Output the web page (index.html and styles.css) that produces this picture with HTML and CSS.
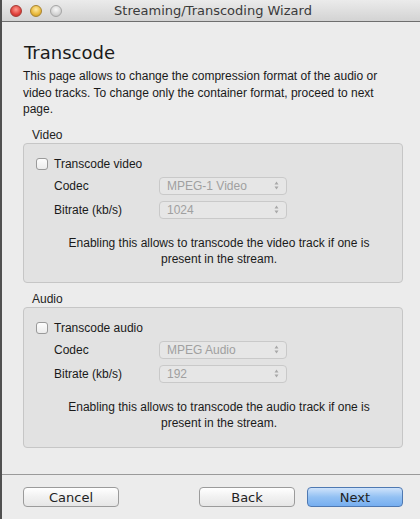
FILE: index.html
```html
<!DOCTYPE html>
<html lang="en">
<head>
<meta charset="UTF-8">
<title>Streaming/Transcoding Wizard</title>
<link rel="stylesheet" href="styles.css">
</head>
<body>
<div class="window">
    <div class="titlebar">
        <div class="lights">
            <span class="light red"></span>
            <span class="light yellow"></span>
            <span class="light gray"></span>
        </div>
        <div class="title">Streaming/Transcoding Wizard</div>
    </div>

    <div class="content">
        <h1>Transcode</h1>
        <p class="intro">This page allows to change the compression format of the audio or video tracks. To change only the container format, proceed to next page.</p>

        <div class="group">
            <div class="group-label">Video</div>
            <div class="box">
                <label class="check"><span class="checkbox"></span>Transcode video</label>
                <div class="row">
                    <span class="field">Codec</span>
                    <div class="select">MPEG-1 Video
                        <svg class="arrows" width="5" height="9" viewBox="0 0 5 9"><path d="M2.5 0.5 L4.5 3.5 L0.5 3.5 Z M0.5 5.5 L4.5 5.5 L2.5 8.5 Z" fill="#a8a8a8"/></svg>
                    </div>
                </div>
                <div class="row">
                    <span class="field">Bitrate (kb/s)</span>
                    <div class="select">1024
                        <svg class="arrows" width="5" height="9" viewBox="0 0 5 9"><path d="M2.5 0.5 L4.5 3.5 L0.5 3.5 Z M0.5 5.5 L4.5 5.5 L2.5 8.5 Z" fill="#a8a8a8"/></svg>
                    </div>
                </div>
                <p class="note">Enabling this allows to transcode the video track if one is present in the stream.</p>
            </div>
        </div>

        <div class="group">
            <div class="group-label">Audio</div>
            <div class="box">
                <label class="check"><span class="checkbox"></span>Transcode audio</label>
                <div class="row">
                    <span class="field">Codec</span>
                    <div class="select">MPEG Audio
                        <svg class="arrows" width="5" height="9" viewBox="0 0 5 9"><path d="M2.5 0.5 L4.5 3.5 L0.5 3.5 Z M0.5 5.5 L4.5 5.5 L2.5 8.5 Z" fill="#a8a8a8"/></svg>
                    </div>
                </div>
                <div class="row">
                    <span class="field">Bitrate (kb/s)</span>
                    <div class="select">192
                        <svg class="arrows" width="5" height="9" viewBox="0 0 5 9"><path d="M2.5 0.5 L4.5 3.5 L0.5 3.5 Z M0.5 5.5 L4.5 5.5 L2.5 8.5 Z" fill="#a8a8a8"/></svg>
                    </div>
                </div>
                <p class="note">Enabling this allows to transcode the audio track if one is present in the stream.</p>
            </div>
        </div>
    </div>

    <div class="footer">
        <button class="btn">Cancel</button>
        <div class="nav">
            <button class="btn">Back</button>
            <button class="btn primary">Next</button>
        </div>
    </div>
</div>
</body>
</html>
```

FILE: styles.css
```css
html, body{
    margin: 0;
    padding: 0;
}
body{
    background: #ececec;
    font-family: "Liberation Sans", Arial, sans-serif;
    font-size: 12px;
    color: #1a1a1a;
}
.window{
    height: 519px;
    border-left: 2px solid #505050;
    box-sizing: border-box;
    display: flex;
    flex-direction: column;
    overflow: hidden;
}
.titlebar{
    height: 21px;
    flex: none;
    display: flex;
    align-items: center;
    background: linear-gradient(#ebebeb, #d3d3d3);
    border-bottom: 1px solid #6e6e6e;
}
.lights{
    display: flex;
    gap: 8px;
    padding-left: 8px;
}
.light{
    width: 12px;
    height: 12px;
    border-radius: 50%;
    box-sizing: border-box;
}
.red{
    background: radial-gradient(circle at 50% 35%, #ff9a90, #e0403a 60%, #b52a26);
    border: 1px solid #a63a34;
}
.yellow{
    background: radial-gradient(circle at 50% 35%, #ffe9a0, #e8b83a 60%, #b88a20);
    border: 1px solid #a88430;
}
.gray{
    background: radial-gradient(circle at 50% 35%, #f8f8f8, #d4d4d4 60%, #b5b5b5);
    border: 1px solid #a5a5a5;
}
.title{
    flex: 1;
    text-align: center;
    font-family: "DejaVu Sans", sans-serif;
    font-size: 13px;
    color: #3a3a3a;
    margin-right: 56px;
}
.content{
    flex: 1;
    padding: 0 15px 0 21px;
}
h1{
    font-family: "DejaVu Sans", sans-serif;
    font-size: 18px;
    font-weight: normal;
    margin: 19px 0 0 1px;
    line-height: 24px;
}
.intro{
    margin: 3px 0 0 0;
    line-height: 16.5px;
}
.group{
    margin-top: 10px;
}
.group + .group{
    margin-top: 9px;
}
.group-label{
    padding-left: 9px;
    line-height: 15px;
    color: #222;
}
.box{
    border: 1px solid #c6c6c6;
    border-radius: 4px;
    background: #e2e2e2;
    padding: 12px 0 0 12px;
    height: 140px;
    box-sizing: border-box;
    width: 380px;
}
.group + .group .box{
    height: 141px;
}
.check{
    display: flex;
    align-items: center;
    gap: 6px;
    line-height: 16px;
}
.checkbox{
    width: 12px;
    height: 12px;
    border: 1px solid #9a9a9a;
    border-radius: 3px;
    background: linear-gradient(#fdfdfd, #ececec);
    box-sizing: border-box;
}
.row{
    display: flex;
    align-items: center;
    margin-top: 5px;
    padding-left: 18px;
}
.row + .row{
    margin-top: 6px;
}
.field{
    width: 105px;
}
.select{
    width: 128px;
    height: 18px;
    box-sizing: border-box;
    border: 1px solid #c9c9c9;
    border-radius: 4px;
    background: #e6e6e6;
    color: #a0a0a0;
    padding: 0 7px 0 7px;
    display: flex;
    align-items: center;
    justify-content: space-between;
}
.note{
    margin: 16px 0 0 0;
    padding: 0 22px;
    text-align: center;
    line-height: 16px;
}
.footer{
    flex: none;
    border-top: 1px solid #9a9a9a;
    height: 45px;
    display: flex;
    justify-content: space-between;
    align-items: flex-start;
    padding: 12px 17px 0 21px;
    box-sizing: border-box;
}
.nav{
    display: flex;
    gap: 12px;
}
.btn{
    width: 96px;
    height: 20px;
    border: 1px solid #9b9b9b;
    border-radius: 4px;
    background: linear-gradient(#ffffff, #f1f1f1 50%, #e6e6e6);
    font-family: "DejaVu Sans", sans-serif;
    font-size: 13px;
    color: #222;
    padding: 0;
}
.primary{
    border-color: #4f79b2;
    background: linear-gradient(#cfe3fb, #93c1f3 50%, #76aef0);
}
```
